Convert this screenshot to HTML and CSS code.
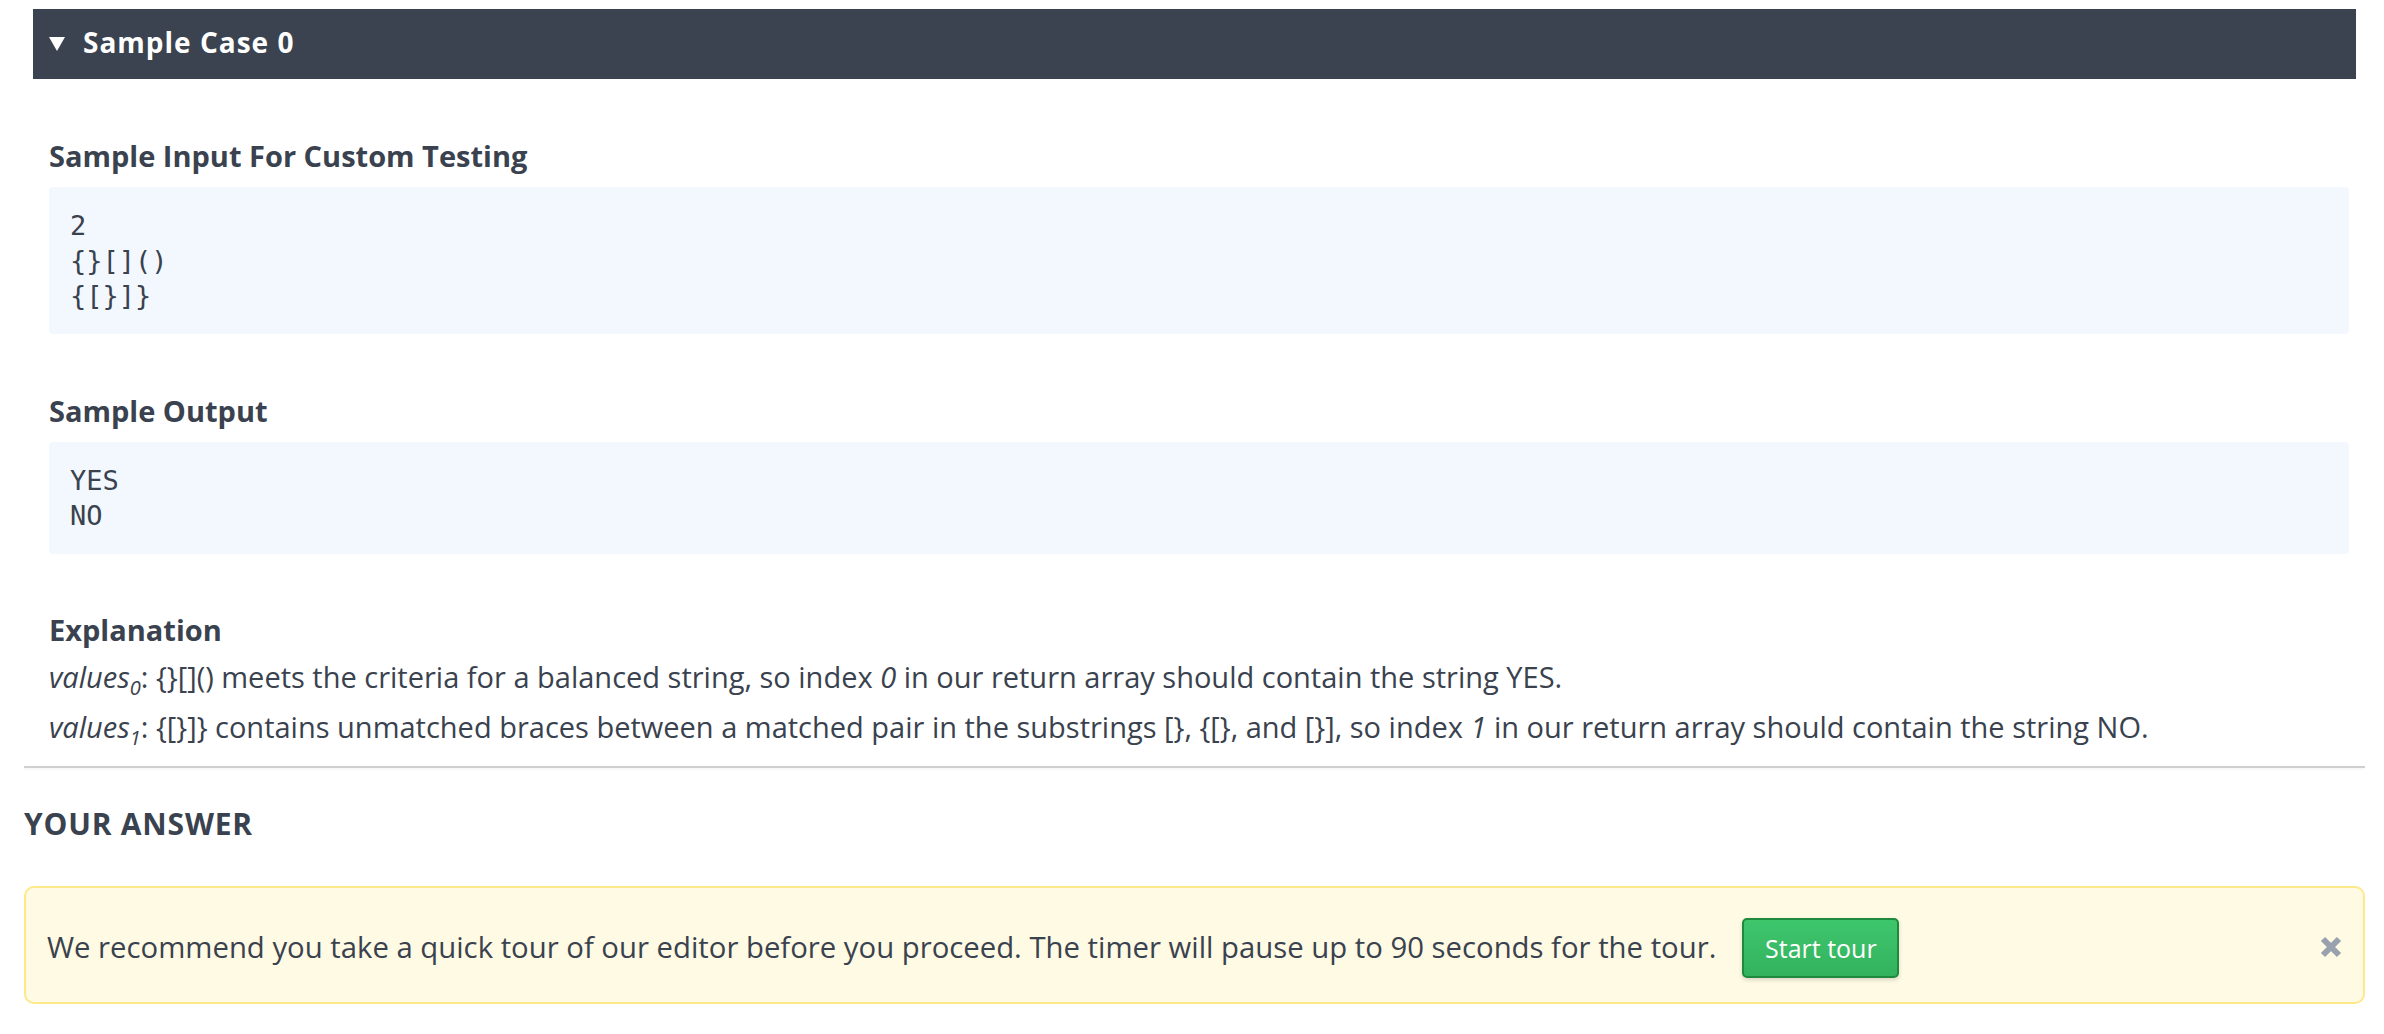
FILE: index.html
```html
<!DOCTYPE html>
<html>
<head>
<meta charset="utf-8">
<link rel="stylesheet" href="styles.css">
</head>
<body>
<div class="page">
  <section class="case">
    <div class="case-head">
      <svg class="caret" width="16" height="15" viewBox="0 0 16 15"><polygon points="0,1 16,1 8,15" fill="#ffffff"/></svg>
      <span>Sample Case 0</span>
    </div>
    <div class="case-body">
      <h4 class="sec-title first">Sample Input For Custom Testing</h4>
      <pre class="code">2
{}[]()
{[}]}</pre>
      <h4 class="sec-title">Sample Output</h4>
      <pre class="code">YES
NO</pre>
      <h4 class="sec-title expl">Explanation</h4>
      <p class="expl-line"><em>values<sub>0</sub></em>: {}[]() meets the criteria for a balanced string, so index <em>0</em> in our return array should contain the string YES.</p>
      <p class="expl-line"><em>values<sub>1</sub></em>: {[}]} contains unmatched braces between a matched pair in the substrings [}, {[}, and [}], so index <em>1</em> in our return array should contain the string NO.</p>
    </div>
  </section>
  <div class="divider"></div>
  <h3 class="answer-title">YOUR ANSWER</h3>
  <div class="alert">
    <span class="alert-text">We recommend you take a quick tour of our editor before you proceed. The timer will pause up to 90 seconds for the tour.</span>
    <button class="btn-tour">Start tour</button>
    <span class="spacer"></span>
    <svg class="close" width="22" height="22" viewBox="0 0 22 22"><path d="M3 3 L19 19 M19 3 L3 19" stroke="#9aa1ae" stroke-width="6" stroke-linecap="butt"/></svg>
  </div>
</div>
</body>
</html>
```

FILE: styles.css
```css
html, body {
  margin: 0;
  padding: 0;
  background: #ffffff;
}

body {
  font-family: "Open Sans", Lato, sans-serif;
  color: #39424e;
  font-size: 29px;
}

.page {
  width: 2341px;
  padding: 9px 0 0 24px;
}

.case-head {
  margin: 0 9px;
  height: 70px;
  box-sizing: border-box;
  padding: 0 0 4px 16px;
  background: #3b4350;
  color: #ffffff;
  display: flex;
  align-items: center;
  font-weight: 700;
  font-size: 28px;
  letter-spacing: 1px;
}

.caret {
  margin-right: 18px;
  margin-top: 2px;
}

.case-body {
  padding: 0 16px 0 25px;
}

.sec-title {
  margin: 61px 0 15px 0;
  font-size: 29px;
  font-weight: 700;
  line-height: 32px;
}

.sec-title.expl {
  margin: 60px 0 6px 0;
}

.code {
  margin: 0;
  background: #f3f8fe;
  border-radius: 4px;
  padding: 21px 21px;
  font-family: "DejaVu Sans Mono", "Liberation Mono", monospace;
  font-size: 27px;
  line-height: 35px;
  color: #39424e;
}

.expl-line {
  margin: 0;
  font-size: 29px;
  line-height: 50px;
  font-weight: 400;
}

.expl-line em {
  font-style: italic;
}

.expl-line sub {
  font-size: 20px;
  line-height: 0;
}

.divider {
  margin-top: 14px;
  height: 2px;
  background: #d0d0d0;
  box-shadow: 0 1px 3px rgba(0, 0, 0, 0.06);
}

.answer-title {
  margin: 40px 0 0 0;
  font-size: 30px;
  font-weight: 700;
  line-height: 32px;
  letter-spacing: 0.8px;
}

.alert {
  margin-top: 46px;
  height: 118px;
  box-sizing: border-box;
  background: #fffae3;
  border: 2px solid #fde98a;
  border-radius: 10px;
  display: flex;
  align-items: center;
  padding: 4px 21px 0 21px;
}

.alert-text {
  font-size: 29.3px;
  color: #39424e;
}

.btn-tour {
  margin: 2px 0 0 26px;
  width: 157px;
  height: 60px;
  border: 2px solid #1f8a3d;
  border-radius: 5px;
  background: linear-gradient(#3ec66d, #33b25e);
  color: #ffffff;
  font-family: "Open Sans", Lato, sans-serif;
  font-size: 25px;
  box-shadow: 0 2px 4px rgba(0, 0, 0, 0.15);
  padding: 0;
}

.spacer {
  flex: 1;
}
```
